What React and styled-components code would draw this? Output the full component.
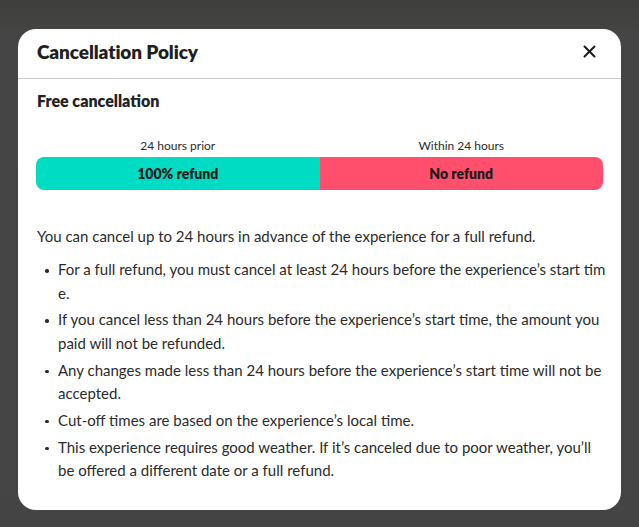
import React from "react";
import styled, { createGlobalStyle } from "styled-components";

const GlobalStyle = createGlobalStyle`
  html, body {
    margin: 0;
    padding: 0;
    background: #444444;
  }
  body {
    font-family: Lato, "Noto Sans", sans-serif;
    color: #2b2b2b;
  }
`;

// The first rule is broken mid-word in the original, so its lines are given explicitly.
const rules = [
  [
    "For a full refund, you must cancel at least 24 hours before the experience’s start tim",
    "e.",
  ],
  "If you cancel less than 24 hours before the experience’s start time, the amount you paid will not be refunded.",
  "Any changes made less than 24 hours before the experience’s start time will not be accepted.",
  "Cut-off times are based on the experience’s local time.",
  "This experience requires good weather. If it’s canceled due to poor weather, you’ll be offered a different date or a full refund.",
];

const Backdrop = styled.div`
  min-height: 527px;
  padding: 29px 18px 17px;
  box-sizing: border-box;
  background: linear-gradient(180deg, #3f3f3d 0px, #454545 40px, #444444 100%);
`;

const Modal = styled.div`
  width: 603px;
  height: 481px;
  background: #ffffff;
  border-radius: 18px;
  overflow: hidden;
  display: flex;
  flex-direction: column;
`;

const Header = styled.div`
  height: 50px;
  box-sizing: border-box;
  display: flex;
  align-items: center;
  justify-content: space-between;
  padding: 0 20px 4px 19px;
  border-bottom: 1px solid #cacaca;
`;

const Title = styled.h2`
  margin: 0;
  font-size: 19px;
  font-weight: 800;
  color: #1f1f1f;
  letter-spacing: -0.1px;
`;

const CloseButton = styled.button`
  width: 24px;
  height: 24px;
  padding: 0;
  border: none;
  background: none;
  display: flex;
  align-items: center;
  justify-content: center;
  cursor: pointer;
`;

const Body = styled.div`
  padding: 12px 16px 0 19px;
`;

const SubTitle = styled.h3`
  margin: 0;
  font-size: 16px;
  line-height: 20px;
  font-weight: 800;
  color: #222;
`;

const Timeline = styled.div`
  margin-top: 28px;
  margin-left: -1px;
  margin-right: 2px;
  display: grid;
  grid-template-columns: 1fr 1fr;
  row-gap: 4px;
`;

const Label = styled.div`
  text-align: center;
  font-size: 12px;
  line-height: 14px;
  color: #2b2b2b;
`;

const Segment = styled.div`
  height: 33px;
  display: flex;
  align-items: center;
  justify-content: center;
  font-size: 14px;
  font-weight: 800;
  color: #1c1c1c;
  background: ${(p) => p.$color};
  border-radius: ${(p) => (p.$side === "left" ? "8px 0 0 8px" : "0 8px 8px 0")};
`;

const Intro = styled.p`
  margin: 35px 0 0;
  font-size: 15px;
  line-height: 23px;
  color: #2b2b2b;
`;

const List = styled.ul`
  margin: 10px 0 0;
  padding: 0 0 0 21px;
  list-style: none;
`;

const Item = styled.li`
  position: relative;
  font-size: 15px;
  line-height: 23.5px;
  color: #2b2b2b;
  margin-bottom: 3.3px;

  &::before {
    content: "";
    position: absolute;
    left: -13px;
    top: 11px;
    width: 3.5px;
    height: 3.5px;
    border-radius: 50%;
    background: #2b2b2b;
  }
`;

const Line = styled.span`
  display: block;
  white-space: nowrap;
`;

export default function App() {
  return (
    <>
      <GlobalStyle />
      <Backdrop>
        <Modal>
          <Header>
            <Title>Cancellation Policy</Title>
            <CloseButton aria-label="Close">
              <svg width="13" height="13" viewBox="0 0 13 13">
                <path
                  d="M1.5 1.5 L11.5 11.5 M11.5 1.5 L1.5 11.5"
                  stroke="#1a1a1a"
                  strokeWidth="2"
                  strokeLinecap="round"
                />
              </svg>
            </CloseButton>
          </Header>
          <Body>
            <SubTitle>Free cancellation</SubTitle>
            <Timeline>
              <Label>24 hours prior</Label>
              <Label>Within 24 hours</Label>
              <Segment $side="left" $color="#00dbc3">
                100% refund
              </Segment>
              <Segment $side="right" $color="#ff4f6c">
                No refund
              </Segment>
            </Timeline>
            <Intro>
              You can cancel up to 24 hours in advance of the experience for a
              full refund.
            </Intro>
            <List>
              {rules.map((rule, i) => (
                <Item key={i}>
                  {Array.isArray(rule)
                    ? rule.map((line, j) => <Line key={j}>{line}</Line>)
                    : rule}
                </Item>
              ))}
            </List>
          </Body>
        </Modal>
      </Backdrop>
    </>
  );
}
